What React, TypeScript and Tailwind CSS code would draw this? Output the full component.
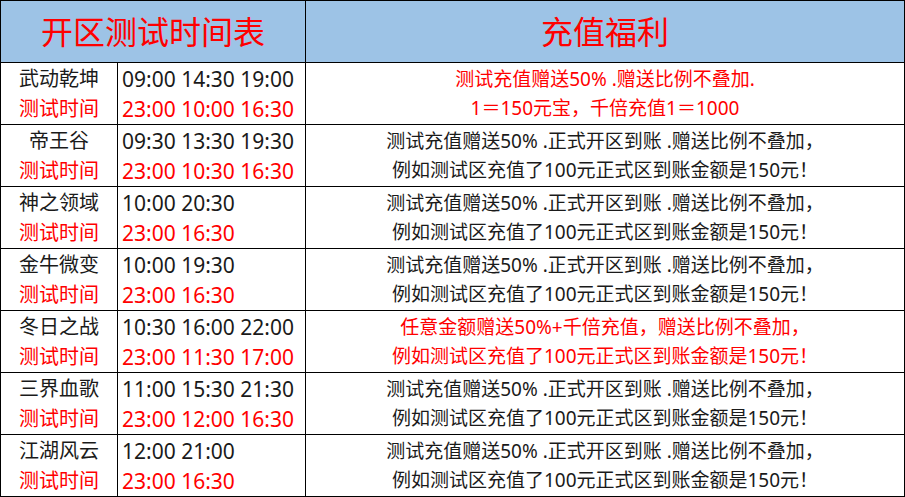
import React from "react";

type Row = {
  name: string;
  times: string;
  test: string;
  l1: string;
  l2: string;
  red?: boolean;
};

const rows: Row[] = [
  {
    name: "武动乾坤",
    times: "09:00 14:30 19:00",
    test: "23:00 10:00 16:30",
    l1: "测试充值赠送50% .赠送比例不叠加.",
    l2: "1＝150元宝，千倍充值1＝1000",
    red: true,
  },
  {
    name: "帝王谷",
    times: "09:30 13:30 19:30",
    test: "23:00 10:30 16:30",
    l1: "测试充值赠送50% .正式开区到账 .赠送比例不叠加，",
    l2: "例如测试区充值了100元正式区到账金额是150元！",
  },
  {
    name: "神之领域",
    times: "10:00 20:30",
    test: "23:00 16:30",
    l1: "测试充值赠送50% .正式开区到账 .赠送比例不叠加，",
    l2: "例如测试区充值了100元正式区到账金额是150元！",
  },
  {
    name: "金牛微变",
    times: "10:00 19:30",
    test: "23:00 16:30",
    l1: "测试充值赠送50% .正式开区到账 .赠送比例不叠加，",
    l2: "例如测试区充值了100元正式区到账金额是150元！",
  },
  {
    name: "冬日之战",
    times: "10:30 16:00 22:00",
    test: "23:00 11:30 17:00",
    l1: "任意金额赠送50%+千倍充值，赠送比例不叠加，",
    l2: "例如测试区充值了100元正式区到账金额是150元！",
    red: true,
  },
  {
    name: "三界血歌",
    times: "11:00 15:30 21:30",
    test: "23:00 12:00 16:30",
    l1: "测试充值赠送50% .正式开区到账 .赠送比例不叠加，",
    l2: "例如测试区充值了100元正式区到账金额是150元！",
  },
  {
    name: "江湖风云",
    times: "12:00 21:00",
    test: "23:00 16:30",
    l1: "测试充值赠送50% .正式开区到账 .赠送比例不叠加，",
    l2: "例如测试区充值了100元正式区到账金额是150元！",
  },
];

export default function App() {
  return (
    <div
      className="w-[905px] h-[497px] bg-white"
      style={{ fontFamily: '"Noto Sans", "Noto Sans CJK SC", sans-serif' }}
    >
      <div className="grid grid-cols-[117px_188px_599px] grid-rows-[62px_repeat(7,62px)] border-l border-t border-black">
        <div className="col-span-2 flex items-center justify-center border-r border-b border-black bg-[#9dc3e6] text-[32px] text-[#ff0000] leading-none">
          开区测试时间表
        </div>
        <div className="flex items-center justify-center border-r border-b border-black bg-[#9dc3e6] text-[32px] text-[#ff0000] leading-none">
          充值福利
        </div>
        {rows.map((r) => (
          <React.Fragment key={r.name}>
            <div className="flex flex-col items-center justify-center border-r border-b border-black text-[20px] leading-[30px]">
              <span className="text-[#1a1a1a]">{r.name}</span>
              <span className="text-[#ff0000]">测试时间</span>
            </div>
            <div className="flex flex-col justify-center border-r border-b border-black pl-[4px] text-[21px] leading-[30px]">
              <span className="text-[#1a1a1a]">{r.times}</span>
              <span className="text-[#ff0000]">{r.test}</span>
            </div>
            <div
              className={`flex flex-col items-center justify-center border-r border-b border-black text-[19px] leading-[29px] ${
                r.red ? "text-[#ff0000]" : "text-[#1a1a1a]"
              }`}
            >
              <span>{r.l1}</span>
              <span>{r.l2}</span>
            </div>
          </React.Fragment>
        ))}
      </div>
    </div>
  );
}
